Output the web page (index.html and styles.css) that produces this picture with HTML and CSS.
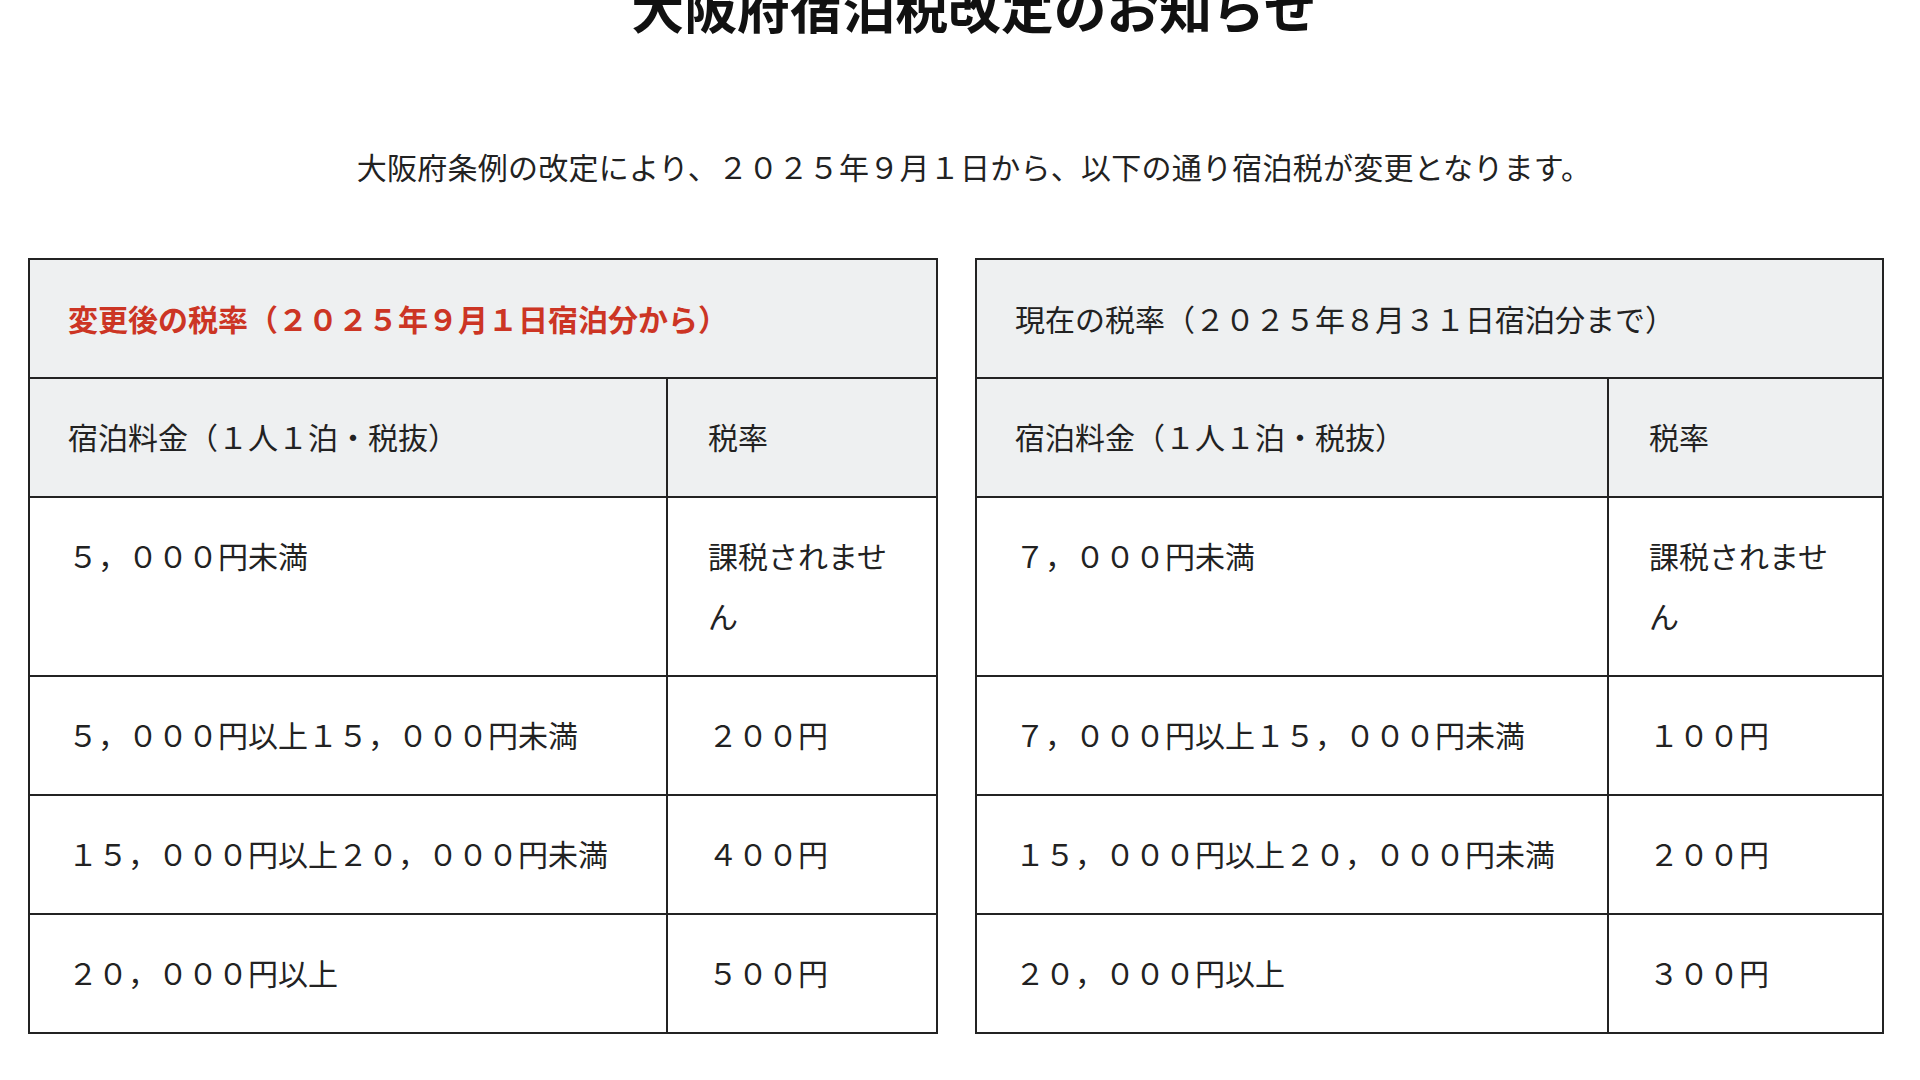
FILE: index.html
```html
<!DOCTYPE html>
<html lang="ja">
<head>
<meta charset="utf-8">
<title>大阪府宿泊税改定のお知らせ</title>
<link rel="stylesheet" href="styles.css">
</head>
<body>
<header class="intro">
  <h1 class="title">大阪府宿泊税改定のお知らせ</h1>
  <p class="lead">大阪府条例の改定により、２０２５年９月１日から、以下の通り宿泊税が変更となります。</p>
</header>
<main class="tables">
  <table class="rate-table rate-table--new">
    <colgroup><col class="c1"><col class="c2"></colgroup>
    <thead>
      <tr><th colspan="2" class="caption caption--new">変更後の税率（２０２５年９月１日宿泊分から）</th></tr>
      <tr><th class="sub">宿泊料金（１人１泊・税抜）</th><th class="sub">税率</th></tr>
    </thead>
    <tbody>
      <tr><td>５，０００円未満</td><td>課税されません</td></tr>
      <tr><td>５，０００円以上１５，０００円未満</td><td>２００円</td></tr>
      <tr><td>１５，０００円以上２０，０００円未満</td><td>４００円</td></tr>
      <tr><td>２０，０００円以上</td><td>５００円</td></tr>
    </tbody>
  </table>
  <table class="rate-table rate-table--current">
    <colgroup><col class="c1"><col class="c2"></colgroup>
    <thead>
      <tr><th colspan="2" class="caption">現在の税率（２０２５年８月３１日宿泊分まで）</th></tr>
      <tr><th class="sub">宿泊料金（１人１泊・税抜）</th><th class="sub">税率</th></tr>
    </thead>
    <tbody>
      <tr><td>７，０００円未満</td><td>課税されません</td></tr>
      <tr><td>７，０００円以上１５，０００円未満</td><td>１００円</td></tr>
      <tr><td>１５，０００円以上２０，０００円未満</td><td>２００円</td></tr>
      <tr><td>２０，０００円以上</td><td>３００円</td></tr>
    </tbody>
  </table>
</main>
</body>
</html>
```
FILE: styles.css
```css
html, body {
  margin: 0;
  padding: 0;
  background: #ffffff;
}
body {
  font-family: "Noto Sans CJK JP", "Noto Sans", sans-serif;
  color: #222222;
  overflow: hidden;
}
.intro {
  padding-left: 28px;
  text-align: center;
}
.title {
  margin: -30px 0 0;
  font-size: 52.8px;
  line-height: 72px;
  font-weight: 700;
  color: #111111;
}
.lead {
  margin: 94px 0 0;
  font-size: 30px;
  line-height: 60px;
  letter-spacing: 0.25px;
  color: #222222;
}
.tables {
  display: flex;
  gap: 37px;
  margin-top: 62px;
  padding-left: 28px;
}
.rate-table {
  border-collapse: collapse;
  table-layout: fixed;
  width: 908px;
  font-size: 30px;
  line-height: 60px;
}
.rate-table--new .c1 { width: 638px; }
.rate-table--new .c2 { width: 270px; }
.rate-table--current { width: 907px; }
.rate-table--current .c1 { width: 632px; }
.rate-table--current .c2 { width: 275px; }
.rate-table th,
.rate-table td {
  border: 2px solid #232323;
  padding: 27px 37px 30px 38px;
  text-align: left;
  vertical-align: top;
  font-weight: 400;
  color: #222222;
}
.rate-table thead th {
  background: #eef0f1;
}
.rate-table th.caption {
  padding-top: 28px;
  padding-bottom: 29px;
}
.caption--new {
  color: #cc3524 !important;
  font-weight: 700 !important;
}
.rate-table td:last-child {
  padding-left: 40px;
}
.rate-table th.sub:last-child {
  padding-left: 40px;
}
```
